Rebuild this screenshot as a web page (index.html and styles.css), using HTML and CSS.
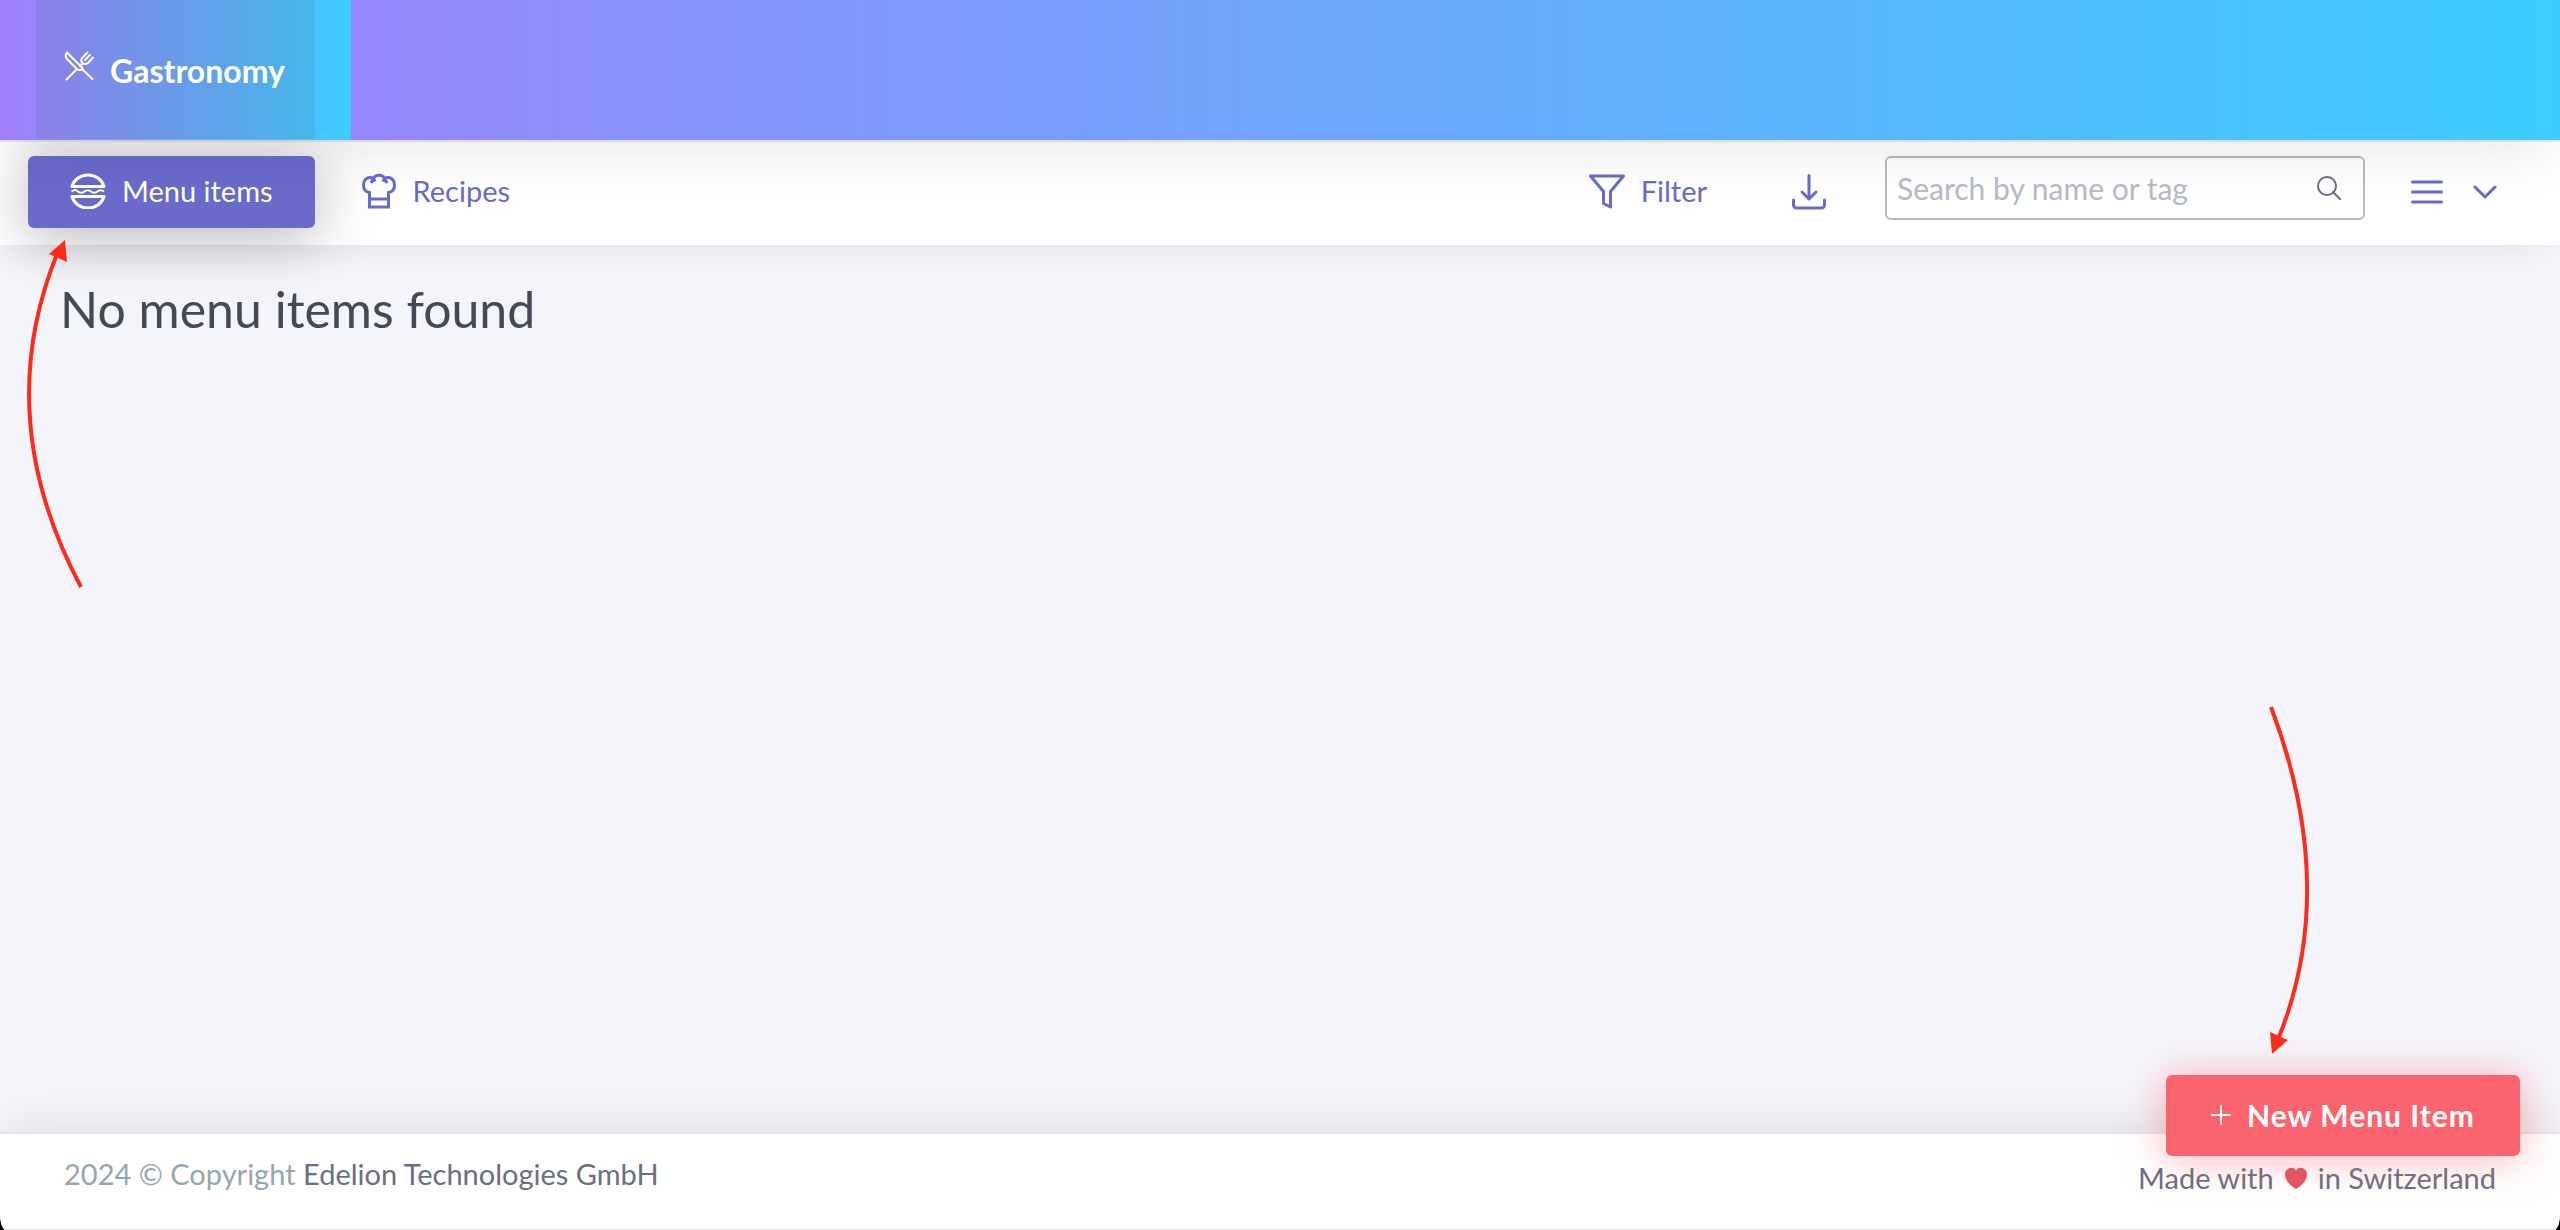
FILE: index.html
```html
<!DOCTYPE html>
<html lang="en">
<head>
  <meta charset="UTF-8">
  <meta name="viewport" content="width=device-width, initial-scale=1.0">
  <title>Gastronomy</title>
  <link rel="stylesheet" href="styles.css">
</head>
<body>

  <!-- Module header -->
  <header class="header">
    <div class="module-tab">
      <a href="#" class="module-link">
        <svg class="module-icon" viewBox="0 0 30 30" fill="none" stroke="currentColor" stroke-width="2" stroke-linecap="round" stroke-linejoin="round">
          <path d="M3 1.500C1 4 1.500 6.500 3.500 8.500L13 18c1.500 1.500 3.500 1.500 5 0L28.500 28M3 1.500L18.500 17M12 19l-9.500 9.500"/>
          <path d="M18.500 12.500l-2.500 2.500M23.500 1.500L19 6c-2 2-2 4.500-.500 6s4 1.500 6-.500L29 6.500M26 4l-5 5"/>
        </svg>
        <span>Gastronomy</span>
      </a>
    </div>
  </header>

  <!-- Toolbar -->
  <nav class="toolbar">
    <div class="tabs">
      <a href="#" class="tab active">
        <svg class="icon" viewBox="0 0 36 36" fill="none" stroke="currentColor" stroke-width="3" stroke-linejoin="round">
          <path d="M2 13.500C4 7 10 2 18 2s14 5 16 11.500z"/>
          <path d="M2 23.500C4 30 10 35 18 35s14-5 16-11.500z"/>
          <path d="M1.500 18.500c3-2 4-2 6.500 0s4 2 6.500 0 4-2 6.500 0 4 2 6.500 0 4-2 6.500 0" stroke-width="2"/>
        </svg>
        <span>Menu items</span>
      </a>
      <a href="#" class="tab">
        <svg class="icon" viewBox="0 0 36 36" fill="none" stroke="currentColor" stroke-width="3">
          <path d="M8.500 34V19.500C4.500 19 2.500 16 2.500 12c0-6 5-9 10-6.500 2-4.500 9-4.500 11 0 5-2.500 10 .500 10 6.500 0 4-2 7-6 7.500V34zM8.500 26h19M10 10l2.500-4.500 1.500 3M26 10l-2.500-4.500-1.500 3"/>
        </svg>
        <span>Recipes</span>
      </a>
    </div>
    <div class="tools">
      <button type="button" class="tool filter">
        <svg class="icon" viewBox="0 0 36 36" fill="none" stroke="currentColor" stroke-width="3" stroke-linecap="round" stroke-linejoin="round">
          <path d="M1.500 3h33L21.500 18.500V34l-7-3.500v-12z"/>
        </svg>
        <span>Filter</span>
      </button>
      <button type="button" class="tool download" aria-label="Download">
        <svg class="icon" viewBox="0 0 36 36" fill="none" stroke="currentColor" stroke-width="3" stroke-linecap="round" stroke-linejoin="round">
          <path d="M18 1.500V25M11 18l7 7 7-7M2.500 26v5a3 3 0 0 0 3 3h25a3 3 0 0 0 3-3v-5"/>
        </svg>
      </button>
      <form class="search">
        <input type="text" placeholder="Search by name or tag" aria-label="Search by name or tag">
        <button type="submit" aria-label="Search">
          <svg viewBox="0 0 24 24" fill="none" stroke="currentColor" stroke-width="2" stroke-linecap="round">
            <circle cx="10" cy="10" r="9"/>
            <path d="M16 16l7 7"/>
          </svg>
        </button>
      </form>
      <button type="button" class="tool view" aria-label="Change view">
        <svg class="icon" viewBox="0 0 36 36" fill="none" stroke="currentColor" stroke-width="3" stroke-linecap="round">
          <path d="M3.500 8h29M3.500 18h29M3.500 28h29"/>
        </svg>
        <svg class="chevron" viewBox="0 0 24 24" fill="none" stroke="currentColor" stroke-width="3" stroke-linecap="round" stroke-linejoin="round">
          <path d="M2 7l10 10L22 7"/>
        </svg>
      </button>
    </div>
  </nav>

  <!-- Item list -->
  <main class="content">
    <h1>No menu items found</h1>
  </main>

  <footer class="footer">
    <p class="copyright">2024 © Copyright <a href="#">Edelion Technologies GmbH</a></p>
    <p class="made">
      Made with
      <svg class="heart" viewBox="0 0 24 22" role="img" aria-label="love">
        <path d="M12 22C7 19 1 14 1 7.500 1 1 9-1.500 12 3.500 15-1.500 23 1 23 7.500 23 14 17 19 12 22z" fill="currentColor"/>
      </svg>
      in Switzerland
    </p>
  </footer>

  <button type="button" class="new-item">
    <svg viewBox="0 0 20 20" stroke="currentColor" stroke-width="2" stroke-linecap="round">
      <path d="M10 1v18M1 10h18"/>
    </svg>
    <span>New Menu Item</span>
  </button>

  <!-- Hint arrows -->
  <svg class="hint hint-tabs" viewBox="0 0 80 360">
    <path d="M61 353Q-29 184 37 20" fill="none" stroke="currentColor" stroke-width="4"/>
    <path d="M45 6L29 20l18 8z" fill="currentColor"/>
  </svg>
  <svg class="hint hint-new" viewBox="0 0 80 360">
    <path d="M21 7Q89 187 29 337" fill="none" stroke="currentColor" stroke-width="4"/>
    <path d="M22 354l-2-22 18 8z" fill="currentColor"/>
  </svg>

</body>
</html>
```

FILE: styles.css
```css
* {
  box-sizing: border-box;
}
html {
  background-color: #000;
}
body {
  position: relative;
  display: flex;
  flex-direction: column;
  min-height: 100vh;
  margin: 0;
  overflow: hidden;
  border-radius: 0 0 6px 6px / 0 0 16px 16px;
  background-color: #f4f5fa;
  color: #6b6f82;
  font-family: Lato, "Open Sans", sans-serif;
  font-size: 29px;
  line-height: 40px;
}
a {
  color: inherit;
  text-decoration: none;
}
button {
  padding: 0;
  border: none;
  background: none;
  color: inherit;
  font: inherit;
  cursor: pointer;
}
svg {
  display: block;
  flex: none;
}

/* Header */
.header {
  position: relative;
  z-index: 3;
  height: 140px;
  background: linear-gradient(90deg, #a37cfb, #3ccdfe);
  box-shadow: 0 2px 0 rgba(100, 100, 120, 0.12), 0 20px 60px -12px rgba(0, 0, 0, 0.11);
}
.module-tab {
  width: 351px;
  height: 100%;
  padding: 0 36px;
  background: linear-gradient(90deg, #a37cfb, #3ccdfe);
}
.module-link {
  display: flex;
  gap: 16px;
  height: 139px;
  padding: 51px 28px 0;
  background-color: rgba(60, 90, 100, 0.13);
  color: #fff;
  font-size: 32px;
  font-weight: bold;
}
.module-icon {
  width: 30px;
  height: 30px;
}

/* Toolbar */
.toolbar {
  position: relative;
  z-index: 2;
  display: flex;
  justify-content: space-between;
  height: 105px;
  padding: 16px 63px 0 28px;
  background-color: #fff;
  box-shadow: 0 12px 40px -12px rgba(0, 0, 0, 0.08);
  color: #6a6acb;
}
.tabs,
.tools {
  display: flex;
  align-items: flex-start;
}
.tabs {
  gap: 4px;
}
.tab {
  display: flex;
  align-items: center;
  gap: 16px;
  height: 72px;
  padding: 0 42px 3px;
  border-radius: 6px;
}
.tab.active {
  background-color: #6a6acb;
  color: #fff;
  box-shadow: 0 8px 60px rgba(0, 0, 0, 0.3);
}
.icon {
  width: 36px;
  height: 36px;
}
.tool {
  display: flex;
  align-items: center;
  gap: 16px;
  height: 72px;
}
.filter {
  padding-bottom: 3px;
}
.download {
  margin: 0 58px 0 84px;
}
.view {
  gap: 28px;
  margin-left: 44px;
}
.chevron {
  width: 24px;
  height: 24px;
}
.search {
  display: flex;
  align-items: center;
  width: 480px;
  height: 64px;
  padding: 0 22px 0 10px;
  border: 2px solid #b6bac6;
  border-radius: 6px;
}
.search input {
  flex: 1;
  min-width: 0;
  padding: 0;
  border: none;
  outline: none;
  background: none;
  color: #6b6f82;
  font: inherit;
  font-size: 30px;
}
.search input::placeholder {
  color: #b5bbc5;
  opacity: 1;
}
.search button {
  color: #6b6f82;
}
.search svg {
  width: 24px;
  height: 24px;
}

/* Content */
.content {
  flex: 1;
  padding: 36px 60px;
}
h1 {
  margin: 0;
  color: #464855;
  font-size: 50px;
  font-weight: normal;
  line-height: 56px;
}

/* Footer */
.footer {
  position: relative;
  display: flex;
  justify-content: space-between;
  align-items: flex-start;
  height: 98px;
  padding: 20px 64px 0;
  border-top: 2px solid #e1e4ea;
  border-bottom: 1px solid #e5e5e5;
  background-color: #fff;
  box-shadow: 0 -12px 50px -6px rgba(0, 0, 0, 0.09);
}
.footer p {
  margin: 0;
}
.copyright {
  color: #94a7b0;
}
.copyright a {
  color: #6b6f82;
}
.footer .made {
  display: flex;
  gap: 10px;
  align-items: center;
  margin-top: 4px;
}
.heart {
  width: 24px;
  height: 22px;
  color: #e55360;
}

/* Floating action */
.new-item {
  position: absolute;
  right: 40px;
  bottom: 74px;
  z-index: 4;
  display: flex;
  align-items: center;
  gap: 16px;
  height: 81px;
  padding: 0 45px 2px;
  border-radius: 6px;
  background-color: #f9646f;
  box-shadow: 0 2px 40px rgba(249, 100, 111, 0.5);
  color: #fff;
  font-size: 30px;
  font-weight: bold;
  letter-spacing: 1px;
}
.new-item svg {
  width: 20px;
  height: 20px;
}

/* Hint arrows */
.hint {
  position: absolute;
  z-index: 5;
  width: 80px;
  height: 360px;
  color: #fe2a1c;
  pointer-events: none;
}
.hint-tabs {
  top: 234px;
  left: 20px;
}
.hint-new {
  right: 230px;
  bottom: 170px;
}
```
